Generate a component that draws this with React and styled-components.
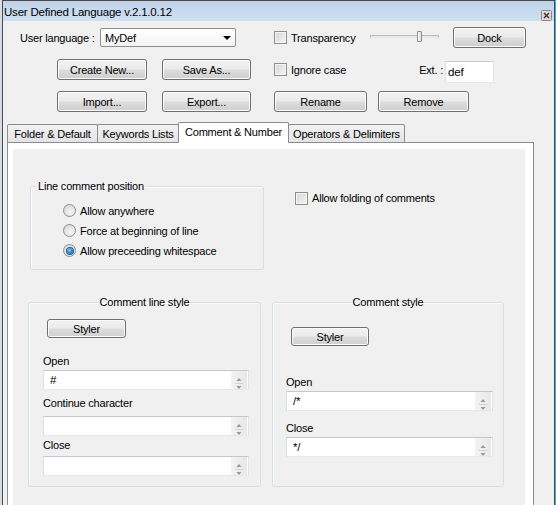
import React from 'react';
import styled, { createGlobalStyle } from 'styled-components';

const GlobalStyle = createGlobalStyle`
  html, body {
    margin: 0;
    padding: 0;
    background: #ffffff;
  }
  body {
    font-family: 'Liberation Sans', Arial, sans-serif;
    font-size: 11px;
    letter-spacing: -0.2px;
    color: #000000;
  }
  * {
    box-sizing: border-box;
  }
`;

const CloseIcon = () => (
  <svg width="11" height="11" viewBox="0 0 11 11">
    <rect x="0.5" y="0.5" width="10" height="10" rx="1" fill="#e8d6d6" stroke="#8a8a8a" />
    <path d="M3 3 L8 8 M8 3 L3 8" stroke="#3a3a3a" strokeWidth="1.5" />
  </svg>
);

const ComboArrow = () => (
  <svg width="8" height="4" viewBox="0 0 8 4">
    <path d="M0 0 H8 L4 4 Z" fill="#000" />
  </svg>
);

const SpinArrows = () => (
  <svg width="16" height="18" viewBox="0 0 16 18">
    <path d="M5.5 10 H10.5 L8 7 Z" fill="#9a9a9a" />
    <path d="M4 12.5 H12" stroke="#d2d2d2" />
    <path d="M5.5 15 H10.5 L8 18 Z" fill="#9a9a9a" />
  </svg>
);

const CheckBox = ({ label, $w, $ml }) => (
  <St.CheckItem $w={$w} $ml={$ml}>
    <St.Box />
    <span>{label}</span>
  </St.CheckItem>
);

const Radio = ({ label, checked }) => (
  <St.RadioRow>
    <St.RadioCircle>{checked && <St.RadioDot />}</St.RadioCircle>
    <span>{label}</span>
  </St.RadioRow>
);

const SpinField = ({ value, $mt, $w }) => (
  <St.Spin $mt={$mt} $w={$w}>
    <St.SpinText>{value}</St.SpinText>
    <St.SpinButtons>
      <SpinArrows />
    </St.SpinButtons>
  </St.Spin>
);

const App = () => {
  return (
    <>
      <GlobalStyle />
      <St.Frame>
        <St.Window>
          <St.TitleBar>
            <St.Title>User Defined Language v.2.1.0.12</St.Title>
            <St.CloseBtn>
              <CloseIcon />
            </St.CloseBtn>
          </St.TitleBar>

          <St.Body>
            <St.Row>
              <St.Label $w={80} $ml={17}>User language :</St.Label>
              <St.Combo>
                <span>MyDef</span>
                <ComboArrow />
              </St.Combo>
              <CheckBox label="Transparency" $w={96} $ml={38} />
              <St.Slider>
                <St.Track />
                <St.Thumb />
              </St.Slider>
              <St.Button $w={73} $ml={14}>Dock</St.Button>
            </St.Row>

            <St.Row>
              <St.Button $w={90} $ml={54}>Create New...</St.Button>
              <St.Button $w={89} $ml={15}>Save As...</St.Button>
              <CheckBox label="Ignore case" $w={142} $ml={23} />
              <St.ExtLabel>Ext. :</St.ExtLabel>
              <St.ExtInput>def</St.ExtInput>
            </St.Row>

            <St.Row>
              <St.Button $w={90} $ml={54}>Import...</St.Button>
              <St.Button $w={89} $ml={15}>Export...</St.Button>
              <St.Button $w={93} $ml={23}>Rename</St.Button>
              <St.Button $w={91} $ml={11}>Remove</St.Button>
            </St.Row>

            <St.TabControl>
              <St.TabStrip>
                <St.Tab $w={91}>Folder &amp; Default</St.Tab>
                <St.Tab $w={82}>Keywords Lists</St.Tab>
                <St.Tab $w={111} $active>Comment &amp; Number</St.Tab>
                <St.Tab $w={117}>Operators &amp; Delimiters</St.Tab>
              </St.TabStrip>

              <St.Panel>
                <St.Page>
                  <St.Group $w={234} $ml={2}>
                    <St.Legend>Line comment position</St.Legend>
                    <St.RadioList>
                      <Radio label="Allow anywhere" />
                      <Radio label="Force at beginning of line" />
                      <Radio label="Allow preceeding whitespace" checked />
                    </St.RadioList>
                  </St.Group>

                  <St.FoldCheck>
                    <CheckBox label="Allow folding of comments" />
                  </St.FoldCheck>

                  <St.Group>
                    <St.Legend $center>Comment line style</St.Legend>
                    <St.Stack $pl={14}>
                      <St.Styler $ml={4} $mt={10} $w={79}>Styler</St.Styler>
                      <St.FieldLabel $mt={16}>Open</St.FieldLabel>
                      <SpinField value="#" $mt={2} $w={206} />
                      <St.FieldLabel $mt={6}>Continue character</St.FieldLabel>
                      <SpinField value="" $mt={6} $w={206} />
                      <St.FieldLabel $mt={2}>Close</St.FieldLabel>
                      <SpinField value="" $mt={4} $w={206} />
                    </St.Stack>
                  </St.Group>

                  <St.Group>
                    <St.Legend $center>Comment style</St.Legend>
                    <St.Stack $pl={13}>
                      <St.Styler $ml={5} $mt={18} $w={78}>Styler</St.Styler>
                      <St.FieldLabel $mt={29}>Open</St.FieldLabel>
                      <SpinField value="/*" $mt={2} $w={207} />
                      <St.FieldLabel $mt={10}>Close</St.FieldLabel>
                      <SpinField value="*/" $mt={2} $w={207} />
                    </St.Stack>
                  </St.Group>
                </St.Page>
              </St.Panel>
            </St.TabControl>
          </St.Body>
        </St.Window>
      </St.Frame>
    </>
  );
};

export default App;

const vistaButton = `
  border: 1px solid #707070;
  border-radius: 3px;
  background: linear-gradient(#f2f2f2 0%, #ebebeb 48%, #dddddd 52%, #cfcfcf 100%);
  box-shadow: inset 0 0 0 1px #fbfbfb;
  font-family: 'Liberation Sans', Arial, sans-serif;
  font-size: 11px;
  letter-spacing: -0.2px;
  color: #000;
  padding: 0;
`;

const St = {
  Frame: styled.div`
    width: 556px;
    height: 505px;
    border-left: 2px solid #d8dde4;
    border-right: 1px solid #35b5e6;
    overflow: hidden;
  `,

  Window: styled.div`
    height: 100%;
    display: flex;
    flex-direction: column;
    border: 1px solid #4a4a4a;
    border-bottom: none;
    background: #f0f0f0;
  `,

  TitleBar: styled.div`
    height: 20px;
    display: flex;
    align-items: flex-end;
    padding: 0 2px 2px 1px;
    background: linear-gradient(#bfd3ea, #d0e0f1);
  `,

  Title: styled.div`
    font-size: 11.5px;
    line-height: 14px;
  `,

  CloseBtn: styled.div`
    margin-left: auto;
    margin-bottom: -2px;
    height: 11px;
    display: flex;
  `,

  Body: styled.div`
    flex: 1;
    display: flex;
    flex-direction: column;
    gap: 11px;
    padding-top: 6px;
    min-height: 0;
  `,

  Row: styled.div`
    display: flex;
    align-items: center;
    height: 21px;
    flex-shrink: 0;
  `,

  Label: styled.div`
    width: ${(p) => p.$w}px;
    margin-left: ${(p) => p.$ml || 0}px;
    line-height: 14px;
  `,

  Combo: styled.div`
    width: 136px;
    height: 19px;
    display: flex;
    align-items: center;
    justify-content: space-between;
    padding: 0 4px 0 4px;
    border: 1px solid #8e8f8f;
    border-radius: 2px;
    background: linear-gradient(#ffffff, #f3f3f3);
  `,

  CheckItem: styled.div`
    display: flex;
    align-items: center;
    gap: 4px;
    line-height: 14px;
    width: ${(p) => (p.$w ? `${p.$w}px` : 'auto')};
    margin-left: ${(p) => p.$ml || 0}px;
  `,

  Box: styled.div`
    width: 13px;
    height: 13px;
    flex-shrink: 0;
    border: 1px solid #8e8f8f;
    background: linear-gradient(135deg, #d6d6d6, #f6f6f6);
    box-shadow: inset 0 0 0 1px #f4f4f4;
  `,

  Slider: styled.div`
    position: relative;
    width: 69px;
    height: 21px;
    display: flex;
    align-items: center;
  `,

  Track: styled.div`
    flex: 1;
    height: 3px;
    margin-top: -3px;
    border: 1px solid #b9b9b9;
    border-bottom-color: #e6e6e6;
    background: #e7eaea;
  `,

  Thumb: styled.div`
    position: absolute;
    left: 47px;
    top: 4px;
    width: 5px;
    height: 11px;
    border: 1px solid #8e8f8f;
    border-radius: 1px;
    background: linear-gradient(90deg, #fafafa, #dcdcdc);
  `,

  Button: styled.button`
    ${vistaButton}
    width: ${(p) => p.$w}px;
    height: 21px;
    margin-left: ${(p) => p.$ml || 0}px;
    flex-shrink: 0;
  `,

  ExtLabel: styled.div`
    width: 29px;
    text-align: right;
    padding-right: 2px;
    line-height: 14px;
  `,

  ExtInput: styled.div`
    width: 49px;
    height: 22px;
    align-self: flex-start;
    margin-top: 2px;
    padding-left: 2px;
    display: flex;
    align-items: center;
    font-size: 11.5px;
    background: #ffffff;
    border: 1px solid;
    border-color: #c9ccd3 #e2e3ea #e3e9ef #dbdfe6;
  `,

  TabControl: styled.div`
    flex: 1;
    display: flex;
    flex-direction: column;
    margin: -1px 0 0 4px;
    width: 527px;
    min-height: 0;
  `,

  TabStrip: styled.div`
    display: flex;
    align-items: flex-end;
    height: 20px;
  `,

  Tab: styled.div`
    width: ${(p) => p.$w}px;
    height: ${(p) => (p.$active ? 21 : 18)}px;
    margin-left: -1px;
    margin-bottom: ${(p) => (p.$active ? -1 : 0)}px;
    &:first-child {
      margin-left: 0;
    }
    position: relative;
    z-index: ${(p) => (p.$active ? 1 : 0)};
    display: flex;
    align-items: center;
    justify-content: center;
    white-space: nowrap;
    border: 1px solid #898c95;
    border-bottom: none;
    border-radius: 2px 2px 0 0;
    background: ${(p) => (p.$active ? '#ffffff' : 'linear-gradient(#f2f2f2, #e4e4e4)')};
    padding-bottom: ${(p) => (p.$active ? 3 : 0)}px;
  `,

  Panel: styled.div`
    flex: 1;
    display: flex;
    border: 1px solid #898c95;
    border-bottom: none;
    background: #ffffff;
    padding: 6px 8px 0 5px;
    min-height: 0;
  `,

  Page: styled.div`
    flex: 1;
    background: #f0f0f0;
    display: grid;
    grid-template-columns: 233px 232px;
    column-gap: 11px;
    row-gap: 25px;
    align-content: start;
    padding: 30px 0 0 15px;
  `,

  Group: styled.fieldset`
    margin: 0 0 0 ${(p) => p.$ml || 0}px;
    padding: 0;
    min-width: 0;
    width: ${(p) => (p.$w ? `${p.$w}px` : 'auto')};
    border: 1px solid #d5dfe5;
    border-radius: 3px;
    box-shadow: inset 1px 1px 0 #fbfbfb;
  `,

  Legend: styled.legend`
    padding: 0 1px;
    margin: ${(p) => (p.$center ? '0 auto' : '0 0 0 6px')};
    line-height: 14px;
    white-space: nowrap;
  `,

  RadioList: styled.div`
    display: flex;
    flex-direction: column;
    gap: 1px;
    padding: 8px 0 9px 32px;
  `,

  RadioRow: styled.div`
    display: flex;
    align-items: center;
    gap: 4px;
    height: 19px;
  `,

  RadioCircle: styled.div`
    width: 13px;
    height: 13px;
    border-radius: 50%;
    border: 1px solid #8e8f8f;
    background: radial-gradient(circle at 60% 65%, #f7f7f7 0%, #e2e2e2 55%, #cfcfcf 100%);
    display: flex;
    align-items: center;
    justify-content: center;
  `,

  RadioDot: styled.div`
    width: 6px;
    height: 6px;
    border-radius: 50%;
    background: radial-gradient(circle at 40% 40%, #8fd3f7 0%, #2c86c8 50%, #174f86 100%);
    box-shadow: 0 0 0 1px #2b5a86;
  `,

  FoldCheck: styled.div`
    align-self: start;
    margin: 12px 0 0 23px;
  `,

  Stack: styled.div`
    display: flex;
    flex-direction: column;
    align-items: flex-start;
    padding: 0 0 10px ${(p) => p.$pl}px;
  `,

  Styler: styled.button`
    ${vistaButton}
    width: ${(p) => p.$w}px;
    height: 19px;
    margin-left: ${(p) => p.$ml}px;
    margin-top: ${(p) => p.$mt}px;
  `,

  FieldLabel: styled.div`
    line-height: 14px;
    margin-top: ${(p) => p.$mt}px;
  `,

  Spin: styled.div`
    width: ${(p) => p.$w}px;
    height: 20px;
    margin-top: ${(p) => p.$mt}px;
    display: flex;
    background: #ffffff;
    border: 1px solid;
    border-color: #c4c7cd #e2e3ea #e3e9ef #dbdfe6;
  `,

  SpinText: styled.div`
    flex: 1;
    padding-left: 6px;
    display: flex;
    align-items: center;
    font-size: 11.5px;
  `,

  SpinButtons: styled.div`
    width: 16px;
    margin: 0 1px 0 0;
    background: linear-gradient(90deg, #f3f3f3, #e8e8e8);
    overflow: hidden;
    display: flex;
  `,
};
